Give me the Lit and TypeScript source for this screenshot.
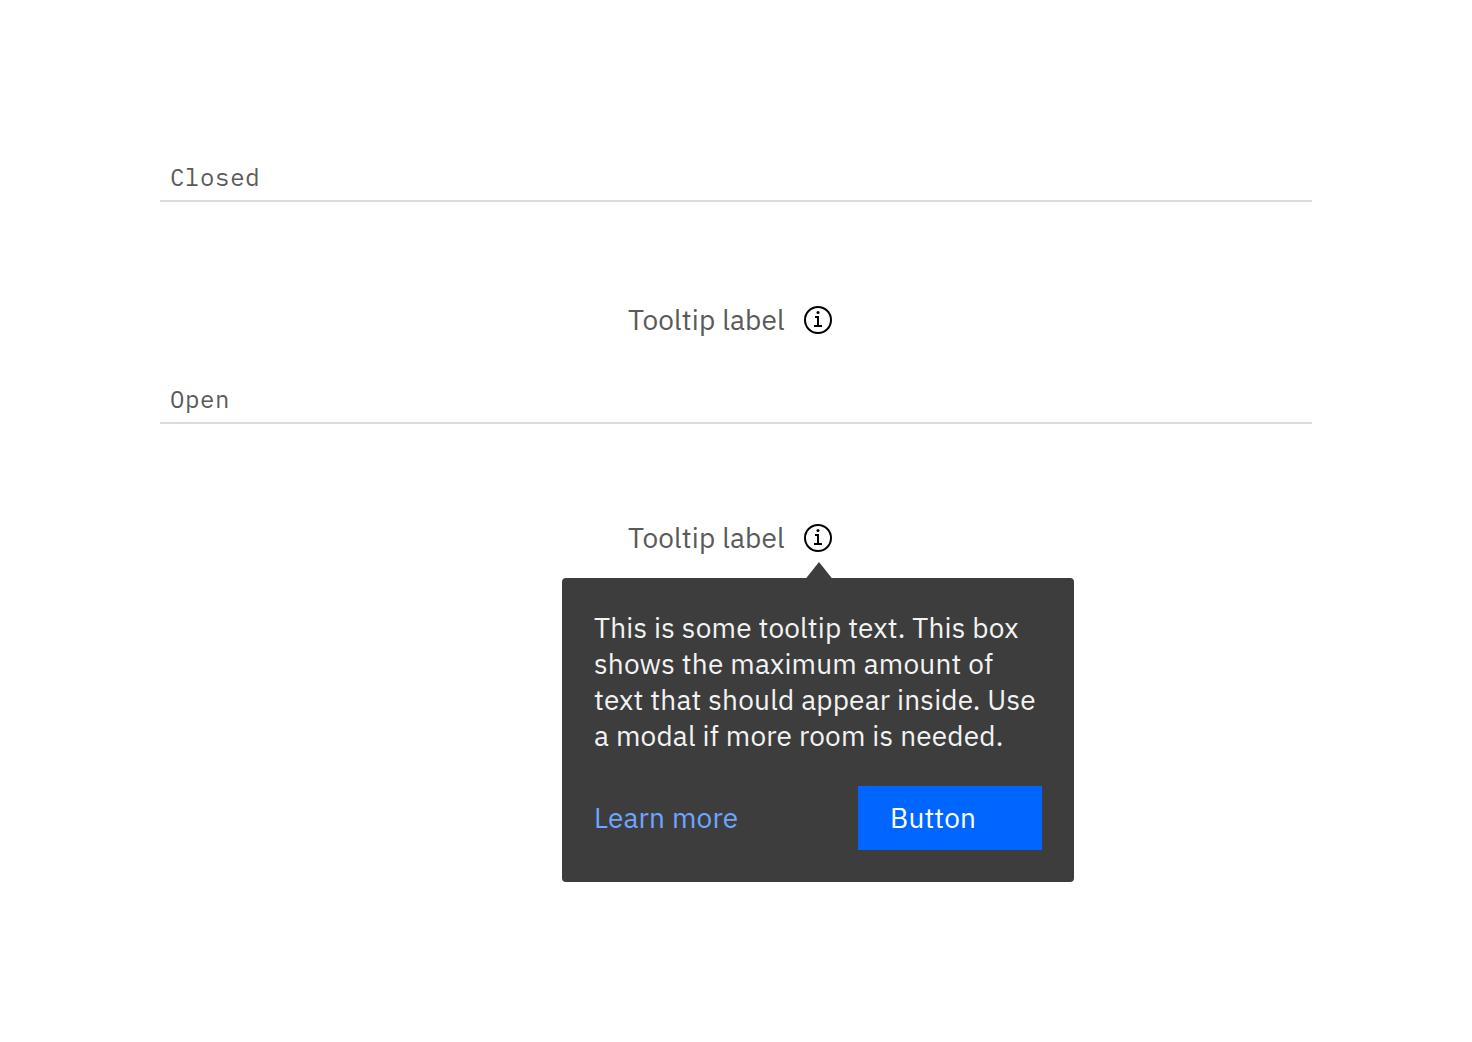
import { LitElement, html, css } from "lit";
import { customElement, property } from "lit/decorators.js";

@customElement("info-icon")
class InfoIcon extends LitElement {
  static styles = css`
    :host { display: block; width: 32px; height: 32px; }
    svg { display: block; }
  `;
  render() {
    return html`<svg width="32" height="32" viewBox="0 0 32 32" role="img" aria-label="Information">
      <circle cx="16" cy="16" r="13" fill="none" stroke="#000" stroke-width="2" />
      <circle cx="16" cy="8.5" r="1.5" />
      <path d="M13 12h4v9h3v2h-8v-2h3v-7h-2z" />
    </svg>`;
  }
}

@customElement("tooltip-label")
class TooltipLabel extends LitElement {
  static styles = css`
    :host { display: flex; align-items: center; height: 32px; }
    .text {
      width: 174px;
      white-space: nowrap;
      font: 400 28px/32px "IBM Plex Sans", Roboto, sans-serif;
      letter-spacing: 0.18px;
      color: #5a5a5a;
    }
  `;
  render() {
    return html`<span class="text">Tooltip label</span><info-icon></info-icon>`;
  }
}

@customElement("state-heading")
class StateHeading extends LitElement {
  static styles = css`
    :host {
      display: block;
      box-sizing: border-box;
      height: 42px;
      padding-left: 10px;
      border-bottom: 2px solid #dcdcdc;
      font: 400 24px/34px "IBM Plex Mono", "Liberation Mono", monospace;
      letter-spacing: 0.64px;
      color: #5a5a5a;
    }
  `;
  @property() name = "";
  render() {
    return html`${this.name}`;
  }
}

@customElement("tooltip-panel")
class TooltipPanel extends LitElement {
  static styles = css`
    :host {
      display: block;
      position: relative;
      box-sizing: border-box;
      width: 512px;
      padding: 32px;
      border-radius: 4px;
      background: #3d3d3d;
      font: 400 28px/36px "IBM Plex Sans", Roboto, sans-serif;
      letter-spacing: 0.18px;
      color: #f3f3f3;
    }
    .caret {
      position: absolute;
      left: 243px;
      top: -16px;
      display: block;
    }
    .line { display: block; white-space: nowrap; }
    .copy { margin: 0; }
    .footer {
      display: flex;
      align-items: center;
      justify-content: space-between;
      margin-top: 32px;
    }
    .link { color: #6ea6ff; text-decoration: none; }
    .button {
      width: 184px;
      height: 64px;
      padding: 0 32px;
      border: 0;
      background: #0066ff;
      color: #fff;
      font: inherit;
      letter-spacing: inherit;
      text-align: left;
    }
  `;
  render() {
    return html`
      <svg class="caret" width="28" height="17" viewBox="0 0 28 17"><path d="M14 0L27.5 17H.5z" fill="#3d3d3d" /></svg>
      <p class="copy">
        <span class="line">This is some tooltip text. This box</span>
        <span class="line">shows the maximum amount of</span>
        <span class="line">text that should appear inside. Use</span>
        <span class="line">a modal if more room is needed.</span>
      </p>
      <div class="footer">
        <a class="link" href="#">Learn more</a>
        <button class="button">Button</button>
      </div>
    `;
  }
}

@customElement("app-root")
class AppRoot extends LitElement {
  static styles = css`
    :host {
      display: block;
      box-sizing: border-box;
      height: 1042px;
      padding: 160px 160px 0;
      background: #fff;
      overflow: hidden;
    }
    .closed { margin: 102px 0 0 468px; }
    .second { margin-top: 46px; }
    .open { margin: 98px 0 0 468px; }
    .panel { margin: 24px 0 0 402px; }
  `;
  render() {
    return html`
      <state-heading name="Closed"></state-heading>
      <tooltip-label class="closed"></tooltip-label>
      <state-heading class="second" name="Open"></state-heading>
      <tooltip-label class="open"></tooltip-label>
      <tooltip-panel class="panel"></tooltip-panel>
    `;
  }
}
